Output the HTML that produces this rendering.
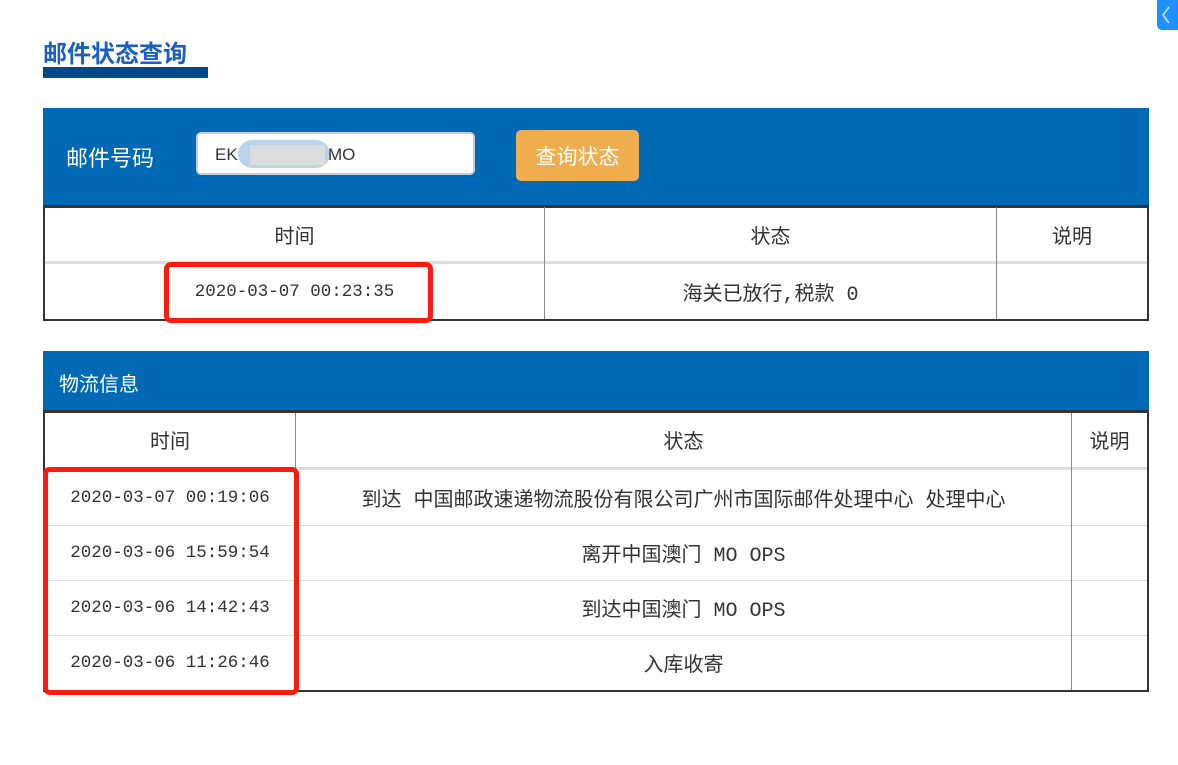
<!DOCTYPE html>
<html><head><meta charset="utf-8"><style>
*{margin:0;padding:0;box-sizing:border-box}
body{width:1178px;height:765px;background:#fff;position:relative;overflow:hidden;font-family:"Liberation Mono","Noto Sans CJK SC",monospace;color:#333}
.a{position:absolute}
.cjk{font-family:"Liberation Mono","WenQuanYi Zen Hei",sans-serif}
.c{position:absolute;display:flex;align-items:center;justify-content:center;font-size:20px}
.blue{background:#0069b6}
.vl{position:absolute;width:1px;background:#888}
.hl{position:absolute;height:2px;background:#ddd}
.red{position:absolute;border:5px solid #ff1a0d;border-radius:7px}
</style></head><body>
<div class="a" style="left:1157px;top:0;width:21px;height:30px;background:#1e90ff;border-radius:0 0 0 5px"></div>
<svg class="a" style="left:1160px;top:5px" width="12" height="20"><path d="M9 2 L3 10 L9 18" stroke="#cfe6ff" stroke-width="1.6" fill="none"/></svg>
<div class="a" style="left:43px;top:36px;font-size:24px;font-weight:bold;color:#1a5fc6;font-family:'Noto Sans CJK SC',sans-serif;line-height:32px">邮件状态查询</div>
<div class="a" style="left:43px;top:67px;width:165px;height:11px;background:#03498a"></div>

<div class="a blue" style="left:43px;top:108px;width:1106px;height:98px"></div>
<div class="a cjk" style="left:66px;top:141px;font-size:22px;color:#fff">邮件号码</div>
<div class="a" style="left:196px;top:132px;width:279px;height:43px;background:#fff;border:2px solid #ccc;border-radius:5px"></div>
<div class="a" style="left:215px;top:145px;font-size:17px;color:#333;font-family:'Liberation Sans',sans-serif">EK</div>
<div class="a" style="left:238px;top:140px;width:92px;height:28px;background:#b9d3ea;border-radius:14px"></div>
<div class="a" style="left:250px;top:145px;width:75px;height:20px;background:#dcdcdc"></div>
<div class="a" style="left:328px;top:145px;font-size:17px;color:#333;font-family:'Liberation Sans',sans-serif">MO</div>
<div class="a cjk" style="left:516px;top:130px;width:123px;height:51px;background:#f0ad4e;border-radius:5px;color:#fff;font-size:21px;display:flex;align-items:center;justify-content:center">查询状态</div>

<div class="a" style="left:43px;top:205px;width:1106px;height:116px;border:2px solid #333;border-top:3px solid #333"></div>
<div class="hl" style="left:45px;top:261px;width:1102px;height:3px"></div>
<div class="vl" style="left:544px;top:207px;height:112px"></div>
<div class="vl" style="left:996px;top:207px;height:112px"></div>
<div class="c cjk" style="left:45px;top:208px;width:499px;height:53px">时间</div>
<div class="c cjk" style="left:545px;top:208px;width:451px;height:53px">状态</div>
<div class="c cjk" style="left:997px;top:208px;width:150px;height:53px">说明</div>
<div class="c" style="left:45px;top:264px;width:499px;height:55px;font-size:17.5px">2020-03-07 00:23:35</div>
<div class="c cjk" style="left:545px;top:264px;width:451px;height:55px">海关已放行,税款 0</div>
<div class="red" style="left:164px;top:262px;width:269px;height:61px"></div>

<div class="a blue" style="left:43px;top:351px;width:1106px;height:61px"></div>
<div class="a cjk" style="left:59px;top:368px;font-size:20px;color:#fff">物流信息</div>
<div class="a" style="left:43px;top:410px;width:1106px;height:282px;border:2px solid #333;border-top:3px solid #333"></div>
<div class="hl" style="left:45px;top:467px;width:1102px;height:3px"></div>
<div class="hl" style="left:45px;top:525px;width:1102px;height:1px"></div>
<div class="hl" style="left:45px;top:580px;width:1102px;height:1px"></div>
<div class="hl" style="left:45px;top:635px;width:1102px;height:1px"></div>
<div class="vl" style="left:295px;top:413px;height:277px"></div>
<div class="vl" style="left:1071px;top:413px;height:277px"></div>
<div class="c cjk" style="left:45px;top:413px;width:250px;height:54px">时间</div>
<div class="c cjk" style="left:296px;top:413px;width:775px;height:54px">状态</div>
<div class="c cjk" style="left:1072px;top:413px;width:75px;height:54px">说明</div>

<div class="c" style="left:45px;top:470px;width:250px;height:55px;font-size:17.5px">2020-03-07 00:19:06</div>
<div class="c" style="left:45px;top:526px;width:250px;height:54px;font-size:17.5px">2020-03-06 15:59:54</div>
<div class="c" style="left:45px;top:581px;width:250px;height:54px;font-size:17.5px">2020-03-06 14:42:43</div>
<div class="c" style="left:45px;top:636px;width:250px;height:54px;font-size:17.5px">2020-03-06 11:26:46</div>
<div class="c cjk" style="left:296px;top:470px;width:775px;height:55px">到达 中国邮政速递物流股份有限公司广州市国际邮件处理中心 处理中心</div>
<div class="c cjk" style="left:296px;top:526px;width:775px;height:54px">离开中国澳门 MO OPS</div>
<div class="c cjk" style="left:296px;top:581px;width:775px;height:54px">到达中国澳门 MO OPS</div>
<div class="c cjk" style="left:296px;top:636px;width:775px;height:54px">入库收寄</div>
<div class="red" style="left:43px;top:467px;width:256px;height:228px"></div>
</body></html>
